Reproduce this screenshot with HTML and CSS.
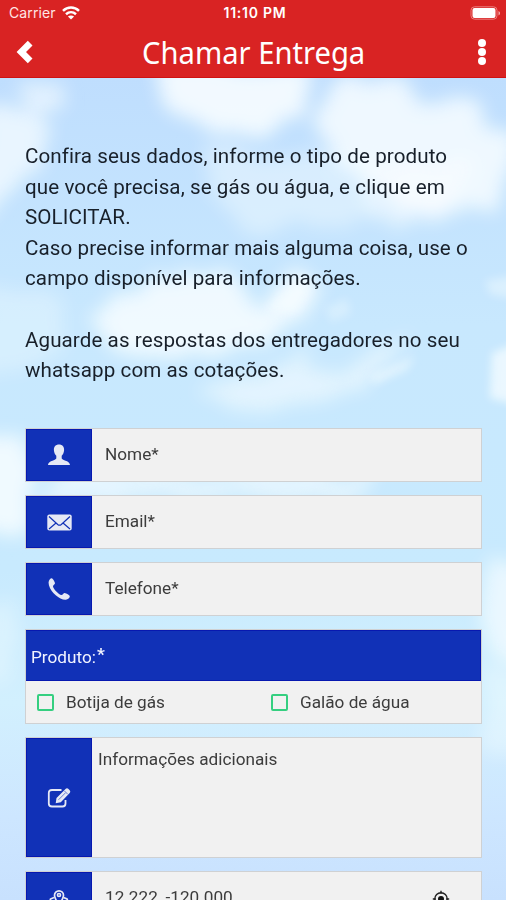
FILE: index.html
```html
<!DOCTYPE html>
<html lang="pt-BR">
<head>
<meta charset="utf-8">
<title>Chamar Entrega</title>
<link rel="stylesheet" href="styles.css">
</head>
<body>
<div class="screen">
  <svg class="sky" viewBox="0 0 506 822" preserveAspectRatio="none" aria-hidden="true">
    <defs>
      <linearGradient id="air" x1="0" y1="0" x2="0" y2="1">
        <stop offset="0" stop-color="#bfdefe"/>
        <stop offset=".3" stop-color="#c8e8fe"/>
        <stop offset=".6" stop-color="#c8eafe"/>
        <stop offset=".76" stop-color="#d2f0fe"/>
        <stop offset=".9" stop-color="#cde6ff"/>
        <stop offset="1" stop-color="#c8e1fe"/>
      </linearGradient>
      <filter id="soft" x="-10%" y="-10%" width="120%" height="120%">
        <feTurbulence type="fractalNoise" baseFrequency=".022" numOctaves="3" seed="4" result="n"/>
        <feDisplacementMap in="SourceGraphic" in2="n" scale="34" xChannelSelector="R" yChannelSelector="G"/>
        <feGaussianBlur stdDeviation="9"/>
      </filter>
      <filter id="crisp" x="-10%" y="-10%" width="120%" height="120%"><feGaussianBlur stdDeviation="4.500"/></filter>
    </defs>
    <rect width="506" height="822" fill="url(#air)"/>
    <g filter="url(#soft)" fill="#fafeff">
      <path d="M158-15h152l-8 40-25 25-70 10-30-30z" opacity=".85"/>
      <path d="M-20 30q50-10 70 20l-10 40-60 60z" opacity=".7"/>
      <path d="M22 5l35 5 5 20-30 5z" opacity=".6"/>
      <path d="M345 5l60-8 20 35 45-10 12 25 44 15-34 75-80-5-70-40-35-50z" opacity=".8"/>
      <path d="M365 90l110-5-25 45-50 22-42-20z" opacity=".6"/>
      <path d="M200 70l180 10-20 65-110 10-50-45z" opacity=".4"/>
      <path d="M85 245l85-50 50 0 40 35 40-40 20 20-20 40-90 30-80-2z" opacity=".8"/>
      <path d="M200 320l100-45 40 15 75-35-60 60-90 25z" opacity=".55"/>
      <path d="M-20 355h48v100h-48z" opacity=".8"/>
      <path d="M60 395h310v24H40z" opacity=".6"/>
      <path d="M485 488h50v90h-50z" opacity=".65"/>
      <path d="M-20 210l80 10 10 60-90 20z" opacity=".3"/>
      <path d="M480 590h50v85h-50z" opacity=".35"/>
      <path d="M-20 525h35v80h-35z" opacity=".3"/>
    </g>
    <g filter="url(#crisp)" fill="#fafeff">
      <path d="M492 275l30-12v65l-32-8z" opacity=".7"/>
      <path d="M485 203l30-6v24l-25-5z" opacity=".4"/>
      <path d="M370 298l45-20-8 14-32 14z" opacity=".5"/>
      <path d="M265 230l40-35 8 15-18 25z" opacity=".4"/>
      <path d="M325 230l22-10 4 16-20 8z" opacity=".3"/>
    </g>
  </svg>

  <header class="topbar">
    <div class="status">
      <div class="carrier"><span>Carrier</span>
        <svg width="18" height="14" viewBox="0 0 18 14" fill="none" stroke="#fff" stroke-width="2.500"><path d="M1 4.800C5.500.5 12.500.5 17 4.800M4 8.200c3-2.700 7-2.700 10 0"/><path d="M9 13.500L5.900 10.600c1.800-1.500 4.400-1.500 6.200 0z" fill="#fff" stroke="none"/></svg>
      </div>
      <div class="clock">11:10 PM</div>
      <svg class="battery" width="31" height="14" viewBox="0 0 31 14"><rect x="1" y=".8" width="26" height="12.400" rx="3.500" fill="none" stroke="#ec7f7f" stroke-width="1"/><rect x="2.500" y="2" width="23" height="10" rx="2" fill="#fff"/><path d="M28.500 5v4.500c2-.8 2-3.700 0-4.500z" fill="#f3aaaa"/></svg>
    </div>
    <div class="titlebar">
      <svg class="back" width="18" height="24" viewBox="0 0 18 24"><path d="M11.800.8L16.500 5.500 10 12l6.500 6.500-4.700 4.700L.6 12z" fill="#fff"/></svg>
      <h1>Chamar Entrega</h1>
      <svg class="more" width="10" height="28" viewBox="0 0 10 28" fill="#fff"><circle cx="5" cy="5" r="4"/><circle cx="5" cy="14" r="4"/><circle cx="5" cy="23" r="4"/></svg>
    </div>
  </header>

  <main>
    <p class="intro">Confira seus dados, informe o tipo de produto<br>que você precisa, se gás ou água, e clique em<br>SOLICITAR.<br>Caso precise informar mais alguma coisa, use o<br>campo disponível para informações.<br><br>Aguarde as respostas dos entregadores no seu<br>whatsapp com as cotações.</p>

    <form class="form">
      <label class="field">
        <span class="icon"><svg width="24" height="24" viewBox="0 0 24 24" fill="#e6e9f5"><path d="M12 1.500c-3.200 0-5.300 2.200-5.100 5.500.1 2.600 1.200 4.700 2.400 5.800v2.300c0 1-.7 1.300-2 1.800C3.800 18.200 1.300 18.900 1 22h22c-.3-3.100-2.800-3.800-6.300-5.100-1.300-.5-2-.8-2-1.800v-2.300c1.200-1.100 2.300-3.200 2.400-5.800.2-3.300-1.900-5.500-5.100-5.500z"/></svg></span>
        <span class="text">Nome*</span>
      </label>
      <label class="field">
        <span class="icon"><svg width="25" height="17" viewBox="0 0 25 17"><rect x=".3" y=".5" width="24.400" height="16" rx="2" fill="#e6e9f5"/><path d="M2 2.500l8.700 8q1.800 1.400 3.600 0L23 2.500M2 15l7-6M23 15l-7-6" fill="none" stroke="#1131b7" stroke-width="1.200"/></svg></span>
        <span class="text">Email*</span>
      </label>
      <label class="field">
        <span class="icon"><svg width="24" height="24" viewBox="0 0 24 24"><path d="M1.600 5.200C1.800 3 3.300 1.200 4.900 1.300c.8.100 3 3.700 3.100 4.900.1 1.400-2.100 2-2 3.300.2 2.500 5.900 8.200 8.400 8.500 1.400.1 2-2.100 3.400-2 1.200.1 4.900 2.300 5 3.200.1 1.700-1.800 3.300-4 3.500C11.500 23.200 1 12.500 1.600 5.200z" fill="#e6e9f5"/></svg></span>
        <span class="text">Telefone*</span>
      </label>

      <div class="product">
        <div class="product-title">Produto:<b>*</b></div>
        <div class="choices">
          <label class="choice"><span class="box"></span><span>Botija de gás</span></label>
          <label class="choice"><span class="box"></span><span>Galão de água</span></label>
        </div>
      </div>

      <label class="field notes">
        <span class="icon"><svg width="24" height="22" viewBox="0 0 24 22" fill="none" stroke="#e6e9f5"><path d="M14.500 3H5Q1.800 3 1.800 6v10.500q0 3 3.200 3h10.500q3 0 3-3V13" stroke-width="1.800"/><path d="M8.700 16.300l.8-5.300L18.500 2.100q1.500-1.500 3 0l1.200 1.200q1.300 1.400 0 2.800l-8.900 9.200z" fill="#e6e9f5" stroke="none"/><path d="M11.500 12.800l7-7M17.300 3.800l3.500 3.500" stroke="#1131b7" stroke-width=".6"/></svg></span>
        <span class="text">Informações adicionais</span>
      </label>

      <label class="field">
        <span class="icon place"><svg width="24" height="24" viewBox="0 0 24 24" fill="none" stroke="#e6e9f5" stroke-width="1.700"><path d="M12 16C9 11.500 7.500 9 7.500 6.300a4.500 4.500 0 019 0C16.500 9 15 11.500 12 16z"/><circle cx="12" cy="6" r="1.500"/><path d="M7 8.500L3.500 10 1 20l7-2 8 2 7-2-3-8-3.500-1.500"/></svg></span>
        <span class="text">12.222, -120.000</span>
        <svg class="locate" width="18" height="18" viewBox="0 0 18 18"><circle cx="9" cy="9" r="6.200" fill="none" stroke="#222" stroke-width="1.400"/><circle cx="9" cy="9" r="3" fill="#111"/><path d="M9 .8v3M9 14.200v3M.8 9h3M14.200 9h3" stroke="#222" stroke-width="1.400"/></svg>
      </label>
    </form>
  </main>
</div>
</body>
</html>
```

FILE: styles.css
```css
* {
  box-sizing: border-box;
}

body {
  margin: 0;
  font-family: Roboto, "Liberation Sans", sans-serif;
}

.screen {
  position: relative;
  width: 506px;
  height: 900px;
  overflow: hidden;
}

.sky {
  position: absolute;
  top: 78px;
  left: 0;
  width: 506px;
  height: 822px;
}

.topbar {
  position: relative;
  height: 78px;
  background: #d92323;
  border-bottom: 1px solid #d01212;
  color: #fff;
}

.status {
  display: grid;
  grid-template-columns: 1fr auto 1fr;
  align-items: center;
  height: 26px;
  padding: 0 5px 0 9px;
}

.carrier {
  display: flex;
  align-items: center;
  gap: 6px;
  font: 14px/26px Inter, sans-serif;
  letter-spacing: 0.1px;
  color: #ffe5e5;
}

.clock {
  font: 600 14px/26px Inter, sans-serif;
  letter-spacing: 0.75px;
}

.battery {
  justify-self: end;
}

.titlebar {
  display: flex;
  align-items: center;
  justify-content: space-between;
  height: 51px;
  padding: 0 19px 0 16px;
}

h1 {
  margin: 0;
  font: 400 30.5px/50px "Noto Sans", sans-serif;
  transform: translateX(-2px) scaleX(0.957);
}

main {
  position: relative;
  padding: 63px 24px 0 25px;
}

.intro {
  height: 287px;
  margin: 0;
  color: #18202a;
  font-size: 20.6px;
  line-height: 30.6px;
  letter-spacing: 0.08px;
  white-space: nowrap;
}

.form {
  display: flex;
  flex-direction: column;
  gap: 13px;
}

.field,
.product {
  background: #f1f1f1;
  border: 1px solid #cfd1d3;
  color: #3c3c3c;
  font-size: 17.2px;
}

.field {
  display: flex;
  height: 54px;
}

.icon {
  display: flex;
  align-items: center;
  justify-content: center;
  width: 66px;
  background: #1131b7;
  border: 1px solid #0718b0;
}

.place {
  padding-top: 5px;
}

.text {
  flex: 1;
  padding-left: 13px;
  line-height: 51px;
}

.product {
  height: 95px;
}

.product-title {
  height: 51px;
  padding-left: 5px;
  background: #1131b7;
  border: 1px solid #0718b0;
  border-left: 0;
  color: #f2f4ff;
  line-height: 52px;
}

.product-title b {
  position: relative;
  top: -3px;
  margin-left: 1px;
}

.choices {
  display: grid;
  grid-template-columns: 234px 1fr;
  height: 42px;
  padding-left: 11px;
}

.choice {
  display: flex;
  align-items: center;
  gap: 12px;
}

.box {
  width: 17px;
  height: 17px;
  border: 2px solid #35cf80;
  border-radius: 2px;
}

.notes {
  height: 121px;
}

.notes .text {
  padding-left: 6px;
  line-height: 42px;
}

.locate {
  margin: 18px 31px 0 0;
}
```
